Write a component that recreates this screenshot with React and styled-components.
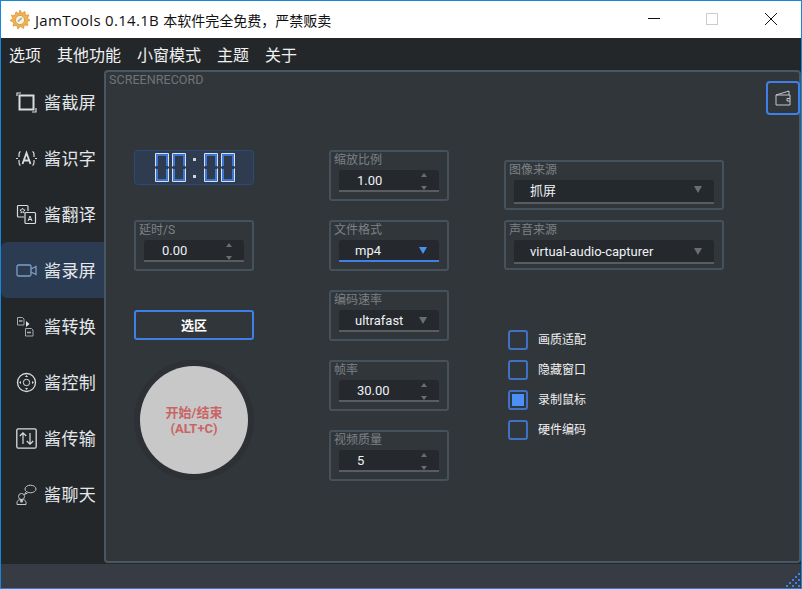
import React from "react";
import styled, { createGlobalStyle } from "styled-components";

const CJK = '"Noto Sans CJK SC", sans-serif';
const UI = `Roboto, ${CJK}`;

const GlobalStyle = createGlobalStyle`
  html, body { margin: 0; padding: 0; background: #23272a; }
  * { box-sizing: border-box; }
`;

const Window = styled.div`
  width: 802px;
  height: 589px;
  border: 1px solid #1a86d9;
  display: flex;
  flex-direction: column;
  overflow: hidden;
  background: #23272a;
  font-family: ${UI};
`;

const TitleBar = styled.div`
  height: 37px;
  flex: none;
  background: #fff;
  display: flex;
  align-items: center;
  padding: 0 1px 0 9px;
`;

const AppTitle = styled.div`
  margin-left: 5px;
  font: 14px ${CJK};
  color: #111;
  flex: 1;
`;

const AppName = styled.span`
  font: 15px "Open Sans", sans-serif;
  letter-spacing: 0.3px;
`;

const WinButton = styled.div`
  width: 58.5px;
  height: 37px;
  padding-bottom: 1px;
  display: flex;
  align-items: center;
  justify-content: center;
`;

const MenuBar = styled.div`
  height: 32px;
  flex: none;
  display: flex;
  align-items: center;
  gap: 16px;
  padding-left: 8px;
  background: #23272a;
`;

const MenuItem = styled.div`
  font: 16px ${CJK};
  color: #f1f1f1;
`;

const Body = styled.div`
  flex: 1;
  display: flex;
  min-height: 0;
`;

const Sidebar = styled.div`
  width: 103px;
  flex: none;
  padding-top: 4px;
`;

const NavItem = styled.div`
  height: 56px;
  display: flex;
  align-items: center;
  gap: 7px;
  padding-left: 15px;
  border-radius: 6px 0 0 6px;
  background: ${(p) => (p.$active ? "#2b3b52" : "transparent")};
`;

const NavLabel = styled.span`
  margin-top: -2px;
  color: #e4e8ec;
  font: 17px ${CJK};
  letter-spacing: 0.4px;
`;

const Panel = styled.div`
  flex: 1;
  position: relative;
  background: #31363b;
  border: 2px solid #4a5761;
  border-radius: 4px;
  padding: 1px 2px;
`;

const PanelTitle = styled.div`
  height: 14px;
  padding-left: 1px;
  font: 12.6px/14px Roboto, sans-serif;
  color: #6f7478;
`;

const Columns = styled.div`
  display: flex;
  margin-top: 63px;
  padding-left: 26px;
`;

const Column = styled.div`
  width: ${(p) => p.$width}px;
  margin-right: ${(p) => p.$gap || 0}px;
  padding-top: ${(p) => p.$top || 0}px;
  display: flex;
  flex-direction: column;
  gap: ${(p) => p.$spacing || 0}px;
`;

const Lcd = styled.div`
  height: 35px;
  padding-left: 1px;
  background: #2f3c4f;
  border: 1px solid #2b4a78;
  border-radius: 4px;
  display: flex;
  align-items: center;
  justify-content: center;
  gap: 3px;
`;

const LcdColon = styled.div`
  width: 12px;
  height: 20px;
  display: flex;
  flex-direction: column;
  justify-content: space-between;
  align-items: center;
`;

const LcdDot = styled.span`
  width: 3px;
  height: 3px;
  background: #c8d4e4;
`;

const Group = styled.div`
  height: ${(p) => p.$height || 51}px;
  margin-top: ${(p) => p.$top || 0}px;
  border: 2px solid #46525b;
  border-radius: 3px;
  padding: 0 8px;
  display: flex;
  flex-direction: column;
`;

const GroupLabel = styled.div`
  height: 18px;
  margin-left: -5px;
  font: 12px/16px ${UI};
  color: #7c8185;
`;

const Field = styled.div`
  height: ${(p) => p.$height || 22}px;
  display: flex;
  align-items: center;
  justify-content: space-between;
  padding: 0 12px ${(p) => p.$lift || 0}px ${(p) => p.$left || 16}px;
  background: #25282c;
  border-radius: 3px 3px 0 0;
  border-bottom: 2px solid ${(p) => (p.$focus ? "#3f7fe8" : "#585d61")};
  color: #eef2f6;
  font: 13px ${UI};
`;

const Stepper = styled.div`
  height: 100%;
  padding-top: 3px;
  display: flex;
  flex-direction: column;
  justify-content: space-between;
`;

const Triangle = styled.span`
  width: 0;
  height: 0;
  border-left: ${(p) => p.$size}px solid transparent;
  border-right: ${(p) => p.$size}px solid transparent;
  ${(p) => (p.$up ? "border-bottom" : "border-top")}: ${(p) => p.$tall}px solid
    ${(p) => p.$color || "#6a6e72"};
`;

const SelectButton = styled.div`
  height: 30px;
  margin-top: 39px;
  padding-bottom: 2px;
  border: 2px solid #3f7fe8;
  border-radius: 3px;
  display: flex;
  align-items: center;
  justify-content: center;
  color: #fff;
  font: bold 13px ${CJK};
`;

const RecordRing = styled.div`
  width: 120px;
  height: 120px;
  margin-top: 20px;
  border-radius: 50%;
  background: #2d3034;
  display: flex;
  align-items: center;
  justify-content: center;
`;

const RecordButton = styled.div`
  width: 108px;
  height: 108px;
  padding-top: 1px;
  border-radius: 50%;
  background: #c8c8c8;
  color: #c96464;
  display: flex;
  align-items: center;
  justify-content: center;
  text-align: center;
  font: bold 13px/16px ${UI};
`;

const Checks = styled.div`
  margin-top: 60px;
  padding-left: 4px;
  display: flex;
  flex-direction: column;
  gap: 10px;
`;

const CheckRow = styled.div`
  height: 20px;
  display: flex;
  align-items: flex-start;
  gap: 10px;
  color: #f0f0f0;
  font: 12px/17px ${CJK};
`;

const CheckBox = styled.div`
  width: 20px;
  height: 20px;
  border: 2px solid #3f72c4;
  border-radius: 3px;
  padding: 2px;
  &::after {
    content: "";
    display: ${(p) => (p.$checked ? "block" : "none")};
    width: 100%;
    height: 100%;
    background: #4a90f8;
  }
`;

const WalletButton = styled.div`
  position: absolute;
  top: 9px;
  right: -1px;
  width: 34px;
  height: 34px;
  border: 2px solid #3f7fe8;
  border-radius: 4px;
  background: #31363b;
  display: flex;
  align-items: center;
  justify-content: center;
`;

const StatusBar = styled.div`
  height: 24px;
  flex: none;
  margin-top: 1px;
  background: #373c44;
  display: flex;
  justify-content: flex-end;
  align-items: flex-end;
`;

const AppLogo = () => (
  <svg width="20" height="20" viewBox="0 0 20 20">
    <path
      d="M10 0l1.8 3.2L15 1.4l.3 3.7 3.7-.2-1.6 3.3 2.6 2-3 1.6 1 3.6-3.7-.4-.8 3.600-3-2.200-2.700 2.600-1-3.600-3.700.600.800-3.600L0 10.600l2.800-2L1.400 5.200l3.600.200L6 1.800l2.700 2z"
      fill="#f4b04a"
      stroke="#d0842a"
      strokeWidth=".6"
    />
    <circle cx="10" cy="10" r="4.600" fill="#f8f0da" stroke="#c4a868" />
    <path d="M7.800 11.600l4-3.600" stroke="#a0a0a0" strokeWidth="1.400" />
  </svg>
);

const icon = { fill: "none", stroke: "#d9dde0", strokeWidth: 1.2 };

// sidebar drawings, all 21px wide
const NavIcons = {
  crop: (
    <svg width="21" height="21" viewBox="0 0 21 21" {...icon}>
      <rect x="3.500" y="3.500" width="14" height="14" strokeWidth="2" />
      <path d="M1 4V1h4M16 20h4v-4" />
    </svg>
  ),
  ocr: (
    <svg width="21" height="21" viewBox="0 0 21 21" {...icon}>
      <path d="M4.500 3.500C3 4 3 5 3 7v2M3 12v2c0 2 0 3 1.500 3.500M16.500 3.500C18 4 18 5 18 7v2M18 12v2c0 2 0 3-1.500 3.500M0 10.500h2M19 10.500h2" />
      <path d="M6.500 16l4-11 4 11M8 12.500h5" strokeWidth="1.800" />
    </svg>
  ),
  translate: (
    <svg width="21" height="21" viewBox="0 0 21 21" {...icon}>
      <path d="M8 13H2.500a1 1 0 0 1-1-1V2.500a1 1 0 0 1 1-1H11a1 1 0 0 1 1 1V7" />
      <path d="M10 8.500h8.500a1 1 0 0 1 1 1v9a1 1 0 0 1-1 1H10a1 1 0 0 1-1-1v-9a1 1 0 0 1 1-1z" />
      <path d="M6.500 4l.8 1.800 1.800.200-1.400 1.200.400 1.800-1.600-1-1.600 1 .400-1.800L3.900 6l1.800-.200z" strokeWidth=".9" />
      <path d="M12 17l2-5 2 5M12.800 15.500h2.400" strokeWidth="1" />
    </svg>
  ),
  record: (
    <svg width="21" height="21" viewBox="0 0 21 21" fill="none" stroke="#7f9fc4" strokeWidth="1.300">
      <rect x="1" y="5" width="14" height="11" rx="1.500" />
      <path d="M15 9l5-2.500v8L15 12" />
    </svg>
  ),
  convert: (
    <svg width="21" height="21" viewBox="0 0 21 21" fill="none" stroke="#a5a9ad" strokeWidth="1">
      <path d="M1.500 1.500h5l1.500 1.500v6H1.500z" />
      <path d="M3 5h3.500" strokeWidth="1.600" />
      <path d="M9.500 12.500h6l1.500 1.500v6H9.500z" />
      <path d="M11 16.500h4" strokeWidth="1.600" />
      <path d="M10 5l3.500 3-3.500 3z" fill="#e8e8e8" stroke="none" />
    </svg>
  ),
  control: (
    <svg width="21" height="21" viewBox="0 0 21 21" {...icon}>
      <circle cx="10.500" cy="10.500" r="9" strokeWidth="1.300" />
      <circle cx="10.500" cy="10.500" r="3.200" strokeWidth="1" />
      <path d="M10.500 3l-1.500 2h3zM10.500 18l-1.500-2h3zM3 10.500l2-1.500v3zM18 10.500l-2-1.500v3z" fill="#d9dde0" stroke="none" />
    </svg>
  ),
  transfer: (
    <svg width="21" height="21" viewBox="0 0 21 21" {...icon}>
      <rect x=".800" y=".800" width="19.400" height="19.400" rx="1.500" strokeWidth="1.300" />
      <path d="M7 16V5M3.800 8L7 4.800 10.200 8M14 5v11M10.800 13l3.200 3.200 3.200-3.200" />
    </svg>
  ),
  chat: (
    <svg width="21" height="21" viewBox="0 0 21 21" fill="none" stroke="#c4c8cb" strokeWidth="1">
      <ellipse cx="14.500" cy="5" rx="5.500" ry="3.800" />
      <path d="M10 8l-1.500 2.500 3-1.500" />
      <circle cx="5.500" cy="12.500" r="3" />
      <path d="M1 20.500v-2c0-2 2-3 4.500-3s4.500 1 4.500 3v2z" />
      <circle cx="5.500" cy="17" r="1.500" fill="#c4c8cb" stroke="none" />
    </svg>
  ),
};

const navItems = [
  ["crop", "酱截屏"],
  ["ocr", "酱识字"],
  ["translate", "酱翻译"],
  ["record", "酱录屏", true],
  ["convert", "酱转换"],
  ["control", "酱控制"],
  ["transfer", "酱传输"],
  ["chat", "酱聊天"],
];

// seven segment zero, the only digit the timer shows
const LcdZero = () => (
  <svg width="14" height="29" viewBox="0 0 14 29" fill="none">
    <path d="M.500 13.500V.500h13v13M.500 15.500v13h13v-13" stroke="#d8dfe8" />
    <path d="M2 13V2h10v11M2 16v11h10V16" stroke="#3f86ff" strokeWidth="1.600" />
  </svg>
);

const Spin = ({ value, left = 18 }) => (
  <Field $left={left}>
    {value}
    <Stepper>
      <Triangle $up $size={3} $tall={4} />
      <Triangle $size={3} $tall={4} />
    </Stepper>
  </Field>
);

const Combo = ({ value, focus, height, lift }) => (
  <Field $focus={focus} $height={height} $lift={lift}>
    {value}
    <Triangle $size={4} $tall={7} $color={focus ? "#4a90f8" : "#6a6e72"} />
  </Field>
);

const FieldGroup = ({ label, height, top, children }) => (
  <Group $height={height} $top={top}>
    <GroupLabel>{label}</GroupLabel>
    {children}
  </Group>
);

const gripDots = [
  [12, 0],
  [9, 3],
  [6, 6],
  [12, 6],
  [3, 9],
  [9, 9],
  [0, 12],
  [6, 12],
  [12, 12],
];

export default function App() {
  return (
    <Window>
      <GlobalStyle />
      <TitleBar>
        <AppLogo />
        <AppTitle>
          <AppName>JamTools 0.14.1B </AppName>本软件完全免费，严禁贩卖
        </AppTitle>
        <WinButton>
          <svg width="12" height="12" viewBox="0 0 12 12">
            <path d="M0 5.500h12" stroke="#111" />
          </svg>
        </WinButton>
        <WinButton>
          <svg width="12" height="12" viewBox="0 0 12 12">
            <rect x=".500" y=".500" width="11" height="11" fill="none" stroke="#ccc" />
          </svg>
        </WinButton>
        <WinButton>
          <svg width="12" height="12" viewBox="0 0 12 12">
            <path d="M0 0l12 12M12 0L0 12" stroke="#111" />
          </svg>
        </WinButton>
      </TitleBar>
      <MenuBar>
        {["选项", "其他功能", "小窗模式", "主题", "关于"].map((m) => (
          <MenuItem key={m}>{m}</MenuItem>
        ))}
      </MenuBar>
      <Body>
        <Sidebar>
          {navItems.map(([key, label, active]) => (
            <NavItem key={key} $active={active}>
              {NavIcons[key]}
              <NavLabel>{label}</NavLabel>
            </NavItem>
          ))}
        </Sidebar>
        <Panel>
          <PanelTitle>SCREENRECORD</PanelTitle>
          <WalletButton>
            <svg width="16" height="16" viewBox="0 0 16 16" fill="none" stroke="#c4c8cb" strokeWidth="1">
              <path d="M1 5l13-4v4M1 5h14v10H1zM15 8.500h-3v2.500h3" />
            </svg>
          </WalletButton>
          <Columns>
            <Column $width={120} $gap={75}>
              <Lcd>
                <LcdZero />
                <LcdZero />
                <LcdColon>
                  <LcdDot />
                  <LcdDot />
                </LcdColon>
                <LcdZero />
                <LcdZero />
              </Lcd>
              <FieldGroup label="延时/S" top={35}>
                <Spin value="0.00" />
              </FieldGroup>
              <SelectButton>选区</SelectButton>
              <RecordRing>
                <RecordButton>
                  开始/结束
                  <br />
                  (ALT+C)
                </RecordButton>
              </RecordRing>
            </Column>
            <Column $width={120} $gap={55} $spacing={19}>
              <FieldGroup label="缩放比例">
                <Spin value="1.00" />
              </FieldGroup>
              <FieldGroup label="文件格式">
                <Combo value="mp4" focus />
              </FieldGroup>
              <FieldGroup label="编码速率">
                <Combo value="ultrafast" />
              </FieldGroup>
              <FieldGroup label="帧率">
                <Spin value="30.00" />
              </FieldGroup>
              <FieldGroup label="视频质量">
                <Spin value="5" />
              </FieldGroup>
            </Column>
            <Column $width={220} $top={10}>
              <FieldGroup label="图像来源" height={50}>
                <Combo value="抓屏" height={24} lift={3} />
              </FieldGroup>
              <FieldGroup label="声音来源" height={50} top={10}>
                <Combo value="virtual-audio-capturer" height={24} />
              </FieldGroup>
              <Checks>
                <CheckRow>
                  <CheckBox />
                  画质适配
                </CheckRow>
                <CheckRow>
                  <CheckBox />
                  隐藏窗口
                </CheckRow>
                <CheckRow>
                  <CheckBox $checked />
                  录制鼠标
                </CheckRow>
                <CheckRow>
                  <CheckBox />
                  硬件编码
                </CheckRow>
              </Checks>
            </Column>
          </Columns>
        </Panel>
      </Body>
      <StatusBar>
        <svg width="15" height="15" viewBox="0 0 15 15">
          {gripDots.map(([x, y]) => (
            <rect key={`${x}-${y}`} x={x} y={y} width="2" height="2" fill="#3f7fe8" />
          ))}
        </svg>
      </StatusBar>
    </Window>
  );
}
